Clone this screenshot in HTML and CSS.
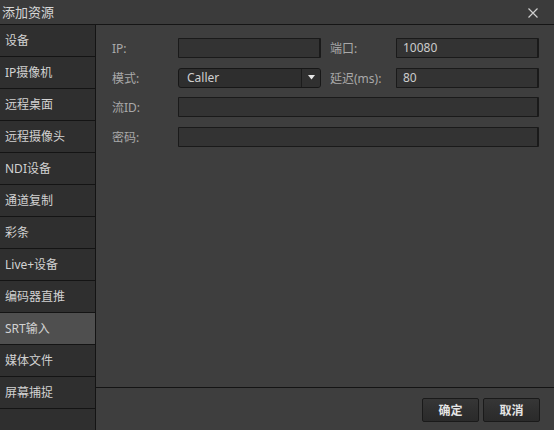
FILE: index.html
```
<!DOCTYPE html>
<html lang="zh">
<head>
<meta charset="utf-8">
<link rel="stylesheet" href="styles.css">
</head>
<body>
<div class="dialog">
  <div class="titlebar">
    <span class="title">添加资源</span>
    <svg class="close" width="10" height="10" viewBox="0 0 10 10"><path d="M0.5 0.5 L9.5 9.5 M9.5 0.5 L0.5 9.5" stroke="#cfcfcf" stroke-width="1.2" fill="none"/></svg>
  </div>
  <div class="body">
    <ul class="sidebar">
      <li class="item">设备</li>
      <li class="item">IP摄像机</li>
      <li class="item">远程桌面</li>
      <li class="item">远程摄像头</li>
      <li class="item">NDI设备</li>
      <li class="item">通道复制</li>
      <li class="item">彩条</li>
      <li class="item">Live+设备</li>
      <li class="item">编码器直推</li>
      <li class="item active">SRT输入</li>
      <li class="item">媒体文件</li>
      <li class="item">屏幕捕捉</li>
    </ul>
    <div class="main">
      <div class="form">
        <label class="label">IP:</label>
        <div class="input"></div>
        <label class="label label-right">端口:</label>
        <div class="input">10080</div>

        <label class="label">模式:</label>
        <div class="select"><span class="select-text">Caller</span><span class="select-btn"><svg width="7" height="5" viewBox="0 0 7 5"><path d="M0 0 H7 L3.5 4.5 Z" fill="#e8e8e8"/></svg></span></div>
        <label class="label label-right">延迟(ms):</label>
        <div class="input">80</div>

        <label class="label">流ID:</label>
        <div class="input wide"></div>

        <label class="label">密码:</label>
        <div class="input wide"></div>
      </div>
      <div class="footer">
        <button class="btn">确定</button>
        <button class="btn">取消</button>
      </div>
    </div>
  </div>
</div>
</body>
</html>
```
FILE: styles.css
```
* { box-sizing: border-box; }
html, body { margin: 0; padding: 0; }
body {
  width: 554px;
  height: 430px;
  background: #3e3e3e;
  font-family: "Noto Sans", "Noto Sans CJK SC", sans-serif;
  font-size: 12px;
  overflow: hidden;
}
.dialog {
  width: 554px;
  height: 430px;
  display: flex;
  flex-direction: column;
}
.titlebar {
  height: 25px;
  flex: none;
  background: #3b3b3b;
  border-bottom: 1px solid #151515;
  display: flex;
  align-items: center;
  justify-content: space-between;
  padding: 0 16px 0 2px;
}
.title {
  color: #d6d6d6;
  font-size: 13px;
  line-height: 24px;
}
.close { display: block; margin-top: 1px; }
.body {
  flex: 1;
  display: flex;
  min-height: 0;
}
.sidebar {
  list-style: none;
  margin: 0;
  padding: 0;
  width: 96px;
  flex: none;
  background: #2f2f2f;
  border-right: 1px solid #141414;
}
.item {
  height: 32px;
  border-bottom: 1px solid #141414;
  color: #d2d2d2;
  padding: 1px 0 0 5px;
  line-height: 30px;
  font-size: 12px;
}
.item.active { background: #4f4f4f; }
.main {
  flex: 1;
  display: flex;
  flex-direction: column;
  background: #3e3e3e;
}
.form {
  flex: 1;
  display: grid;
  grid-template-columns: 66px 143px 75px 143px;
  grid-auto-rows: 20px;
  row-gap: 9.5px;
  align-content: start;
  padding: 13px 0 0 16px;
}
.label {
  color: #a9a9a9;
  line-height: 21px;
  font-size: 12px;
  white-space: nowrap;
}
.label-right { padding-left: 9px; }
.input {
  background: #333333;
  border: 1px solid #1a1a1a;
  border-right-width: 2px;
  border-radius: 1px;
  color: #cccccc;
  line-height: 18px;
  padding-left: 6px;
  font-size: 12px;
}
.input.wide { grid-column: 2 / 5; }
.select {
  display: flex;
  background: #2e2e2e;
  border: 1px solid #171717;
  border-radius: 3px;
  overflow: hidden;
}
.select-text {
  flex: 1;
  color: #d0d0d0;
  line-height: 18px;
  padding-left: 8px;
}
.select-btn {
  width: 19px;
  flex: none;
  display: flex;
  align-items: center;
  justify-content: center;
  background: #303030;
  border-left: 1px solid #1c1c1c;
}
.select-btn svg { display: block; }
.footer {
  height: 43px;
  flex: none;
  border-top: 1px solid #141414;
  display: flex;
  align-items: center;
  justify-content: flex-end;
  gap: 4px;
  padding: 1px 14px 0 0;
}
.btn {
  width: 57px;
  height: 24px;
  background: linear-gradient(#363636, #2a2a2a);
  border: 1px solid #1a1a1a;
  border-radius: 2px;
  color: #e4e4e4;
  font-family: "Noto Sans CJK SC", sans-serif;
  font-weight: bold;
  font-size: 12px;
  padding: 0;
}
```
